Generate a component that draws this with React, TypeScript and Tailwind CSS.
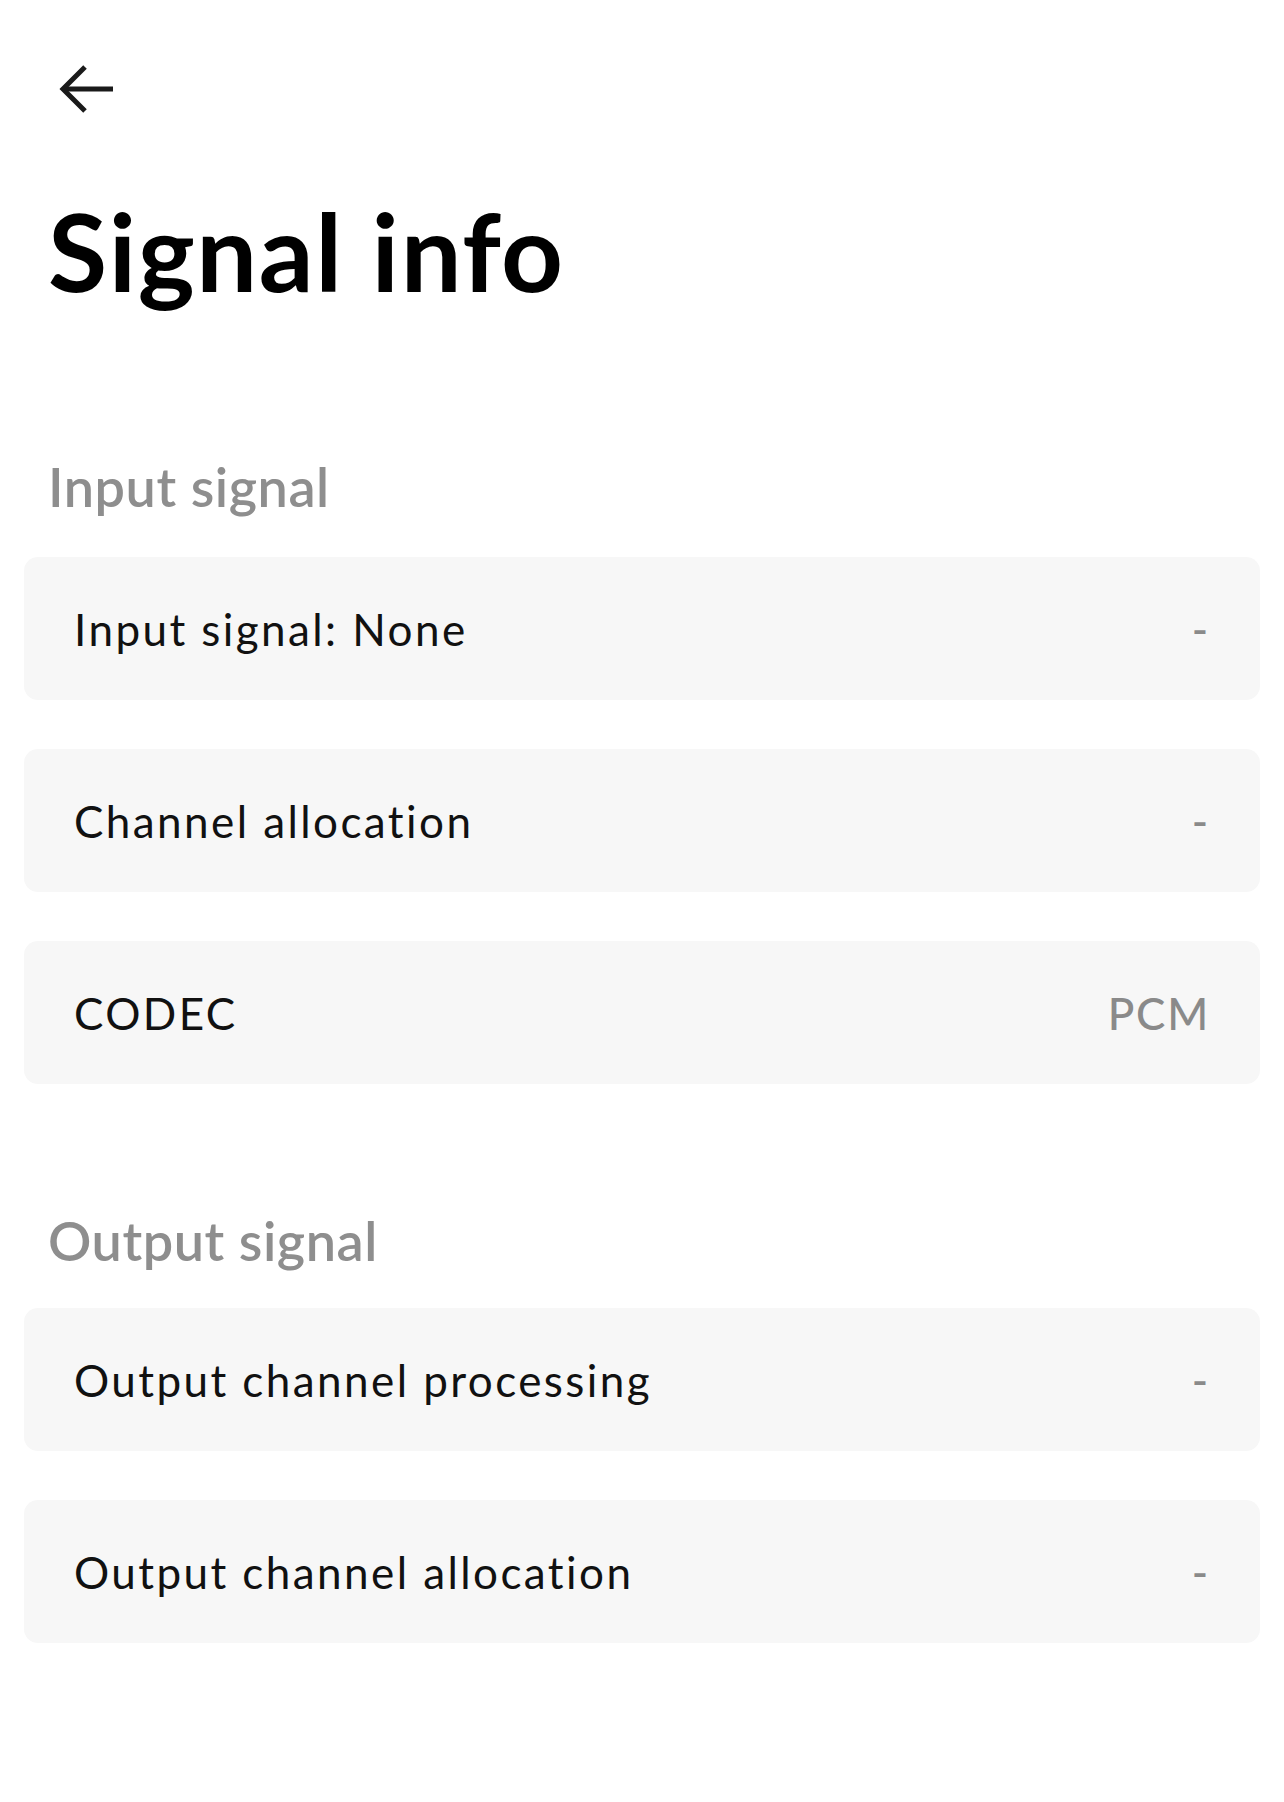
import React from 'react';

type Row = { label: string; value: string };

const inputRows: Row[] = [
  { label: 'Input signal: None', value: '-' },
  { label: 'Channel allocation', value: '-' },
  { label: 'CODEC', value: 'PCM' },
];

const outputRows: Row[] = [
  { label: 'Output channel processing', value: '-' },
  { label: 'Output channel allocation', value: '-' },
];

const BackArrow: React.FC = () => (
  <svg width="52" height="48" viewBox="0 0 52 48" fill="none" className="overflow-visible">
    <path d="M24 2 L2 24 L24 46" stroke="#1a1a1a" strokeWidth="5" strokeLinejoin="miter" />
    <path d="M2 24 H52" stroke="#1a1a1a" strokeWidth="5" />
  </svg>
);

const InfoCard: React.FC<{ row: Row }> = ({ row }) => (
  <div className="flex h-[143px] items-center justify-between rounded-[14px] bg-[#f7f7f7] px-[50px]">
    <span className="text-[44px] leading-none tracking-[0.055em] text-[#111111]">{row.label}</span>
    <span className="text-[44px] font-medium leading-none tracking-[0.04em] text-[#8a8a8a]">{row.value}</span>
  </div>
);

const Section: React.FC<{ title: string; rows: Row[]; className?: string; listClass: string }> = ({
  title,
  rows,
  className,
  listClass,
}) => (
  <section className={className}>
    <h2 className="px-[24px] text-[54px] font-semibold leading-none tracking-[0.01em] text-[#8e8e8e]">{title}</h2>
    <div className={listClass}>
      {rows.map((r) => (
        <InfoCard key={r.label} row={r} />
      ))}
    </div>
  </section>
);

export default function App() {
  return (
    <div
      className="min-h-[1802px] w-full bg-white px-[24px] pb-20"
      style={{ fontFamily: 'Lato, "Noto Sans", sans-serif' }}
    >
      <div className="pl-[37px] pt-[65px]">
        <BackArrow />
      </div>

      <h1 className="mt-[83px] px-[24px] text-[108px] font-bold leading-none tracking-[0.015em] text-black">
        Signal info
      </h1>

      <Section
        title="Input signal"
        rows={inputRows}
        className="mt-[156px]"
        listClass="mt-[43px] flex flex-col gap-[49px]"
      />
      <Section
        title="Output signal"
        rows={outputRows}
        className="mt-[130px]"
        listClass="mt-[40px] flex flex-col gap-[49px]"
      />
    </div>
  );
}
